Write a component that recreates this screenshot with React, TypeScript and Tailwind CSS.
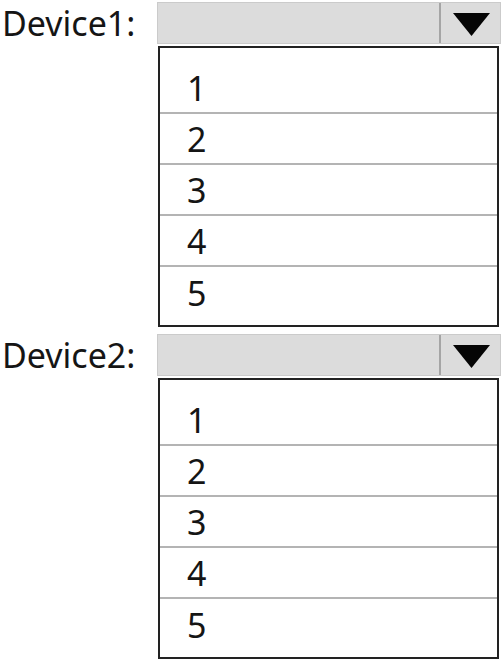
import React from 'react';

const options = ['1', '2', '3', '4', '5'];

const DeviceSelect = ({ label }: { label: string }) => {
    return (
        <div className="flex">
            {/* label column */}
            <div className="w-[157px] h-[43px] flex items-center shrink-0 pl-[2px]">
                <span className="text-[34px] leading-[43px] text-[#151515]">{label}</span>
            </div>
            <div className="flex flex-col flex-1">
                {/* closed dropdown bar */}
                <div className="h-[42px] flex bg-[#dcdcdc] border border-[#cbcbcb]">
                    <div className="flex-1"></div>
                    <div className="w-[61px] h-full flex items-center justify-center border-l-2 border-[#a5a5a5]">
                        <svg width="37" height="23" viewBox="0 0 37 23" className="mt-[3px] -mr-[2px]">
                            <polygon points="0,0 37,0 18.5,23" fill="#050505" />
                        </svg>
                    </div>
                </div>
                {/* option list */}
                <div className="mt-[2px] mr-[2px] ml-[1px] border-2 border-[#222] bg-white pt-[15px] pb-[7px]">
                    <div className="flex flex-col divide-y-2 divide-[#b4b4b4]">
                        {options.map((opt, index) => {
                            return (
                                <div key={index} className="h-[51px] flex items-center pl-[27px]">
                                    <span className="text-[34px] leading-none text-[#151515]">{opt}</span>
                                </div>
                            );
                        })}
                    </div>
                </div>
            </div>
        </div>
    );
};

const App = () => {
    return (
        <div className="w-[501px] h-[663px] bg-white overflow-hidden flex flex-col gap-[7px] pt-[2px]" style={{ fontFamily: '"Noto Sans", "Open Sans", sans-serif' }}>
            <DeviceSelect label="Device1:" />
            <DeviceSelect label="Device2:" />
        </div>
    );
};

export default App;
